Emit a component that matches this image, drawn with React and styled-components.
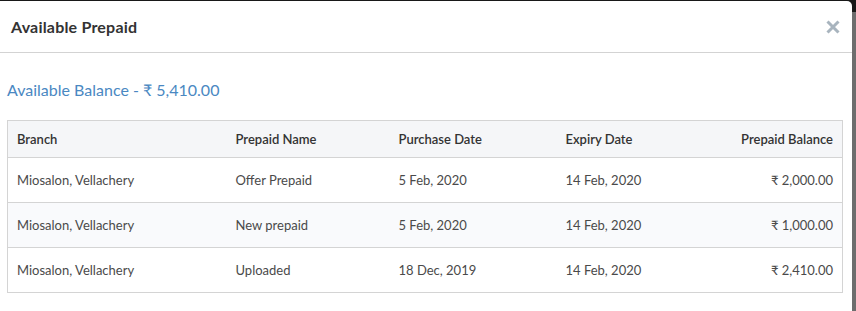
import React from "react";
import styled, { createGlobalStyle } from "styled-components";

const GlobalStyle = createGlobalStyle`
  html, body {
    margin: 0;
    padding: 0;
  }
  body {
    font-family: Lato, "Noto Sans", "DejaVu Sans", sans-serif;
  }
`;

const rows = [
  { branch: "Miosalon, Vellachery", name: "Offer Prepaid", purchase: "5 Feb, 2020", expiry: "14 Feb, 2020", balance: "2,000.00" },
  { branch: "Miosalon, Vellachery", name: "New prepaid", purchase: "5 Feb, 2020", expiry: "14 Feb, 2020", balance: "1,000.00" },
  { branch: "Miosalon, Vellachery", name: "Uploaded", purchase: "18 Dec, 2019", expiry: "14 Feb, 2020", balance: "2,410.00" },
];

const Backdrop = styled.div`
  display: flex;
  height: 311px;
  padding: 1px 4px 0 0;
  box-sizing: border-box;
  background: linear-gradient(#181818 0 12px, #6d6d6d 12px);
  overflow: hidden;
`;

const Modal = styled.div`
  flex: 1;
  background: #fff;
  border-radius: 0 5px 0 0;
  display: flex;
  flex-direction: column;
`;

const Header = styled.div`
  height: 51px;
  display: flex;
  align-items: center;
  justify-content: space-between;
  padding: 0 12px 0 11px;
  border-bottom: 1px solid #d3d3d3;
`;

const Title = styled.h4`
  margin: 0;
  font-size: 16px;
  font-weight: 700;
  color: #333;
  letter-spacing: 0.2px;
`;

const Close = styled.button`
  border: none;
  background: none;
  padding: 0;
  width: 14px;
  height: 14px;
  display: flex;
  cursor: pointer;
`;

const Body = styled.div`
  padding: 0 9px 0 7px;
`;

const Balance = styled.div`
  height: 67px;
  display: flex;
  align-items: center;
  padding-top: 6px;
  box-sizing: border-box;
  font-size: 16px;
  color: #4a88c2;
`;

const Table = styled.table`
  width: 100%;
  border-collapse: collapse;
  border: 1px solid #d4d4d4;
  font-size: 13px;
  table-layout: fixed;
`;

const Th = styled.th`
  height: 36px;
  padding: 0 9px;
  background: #f5f6f8;
  color: #333;
  font-weight: 600;
  text-align: ${(p) => p.$align || "left"};
  border-bottom: 1px solid #d4d4d4;
`;

const Tr = styled.tr`
  background: ${(p) => (p.$striped ? "#f9fafc" : "#fff")};
  border-bottom: 1px solid #d4d4d4;
`;

const Td = styled.td`
  height: 44px;
  padding: 0 9px;
  color: #4a4a4a;
  text-align: ${(p) => p.$align || "left"};
`;

export default function App() {
  return (
    <>
      <GlobalStyle />
      <Backdrop>
        <Modal>
          <Header>
            <Title>Available Prepaid</Title>
            <Close aria-label="Close">
              <svg width="14" height="14" viewBox="0 0 14 14">
                <path d="M1.5 1.5L12.5 12.5M12.5 1.5L1.5 12.5" stroke="#a8b4be" strokeWidth="3" />
              </svg>
            </Close>
          </Header>
          <Body>
            <Balance>Available Balance - ₹ 5,410.00</Balance>
            <Table>
              <colgroup>
                <col style={{ width: "219px" }} />
                <col style={{ width: "163px" }} />
                <col style={{ width: "167px" }} />
                <col style={{ width: "150px" }} />
                <col />
              </colgroup>
              <thead>
                <tr>
                  <Th>Branch</Th>
                  <Th>Prepaid Name</Th>
                  <Th>Purchase Date</Th>
                  <Th>Expiry Date</Th>
                  <Th $align="right">Prepaid Balance</Th>
                </tr>
              </thead>
              <tbody>
                {rows.map((r, i) => (
                  <Tr key={i} $striped={i % 2 === 1}>
                    <Td>{r.branch}</Td>
                    <Td>{r.name}</Td>
                    <Td>{r.purchase}</Td>
                    <Td>{r.expiry}</Td>
                    <Td $align="right">₹ {r.balance}</Td>
                  </Tr>
                ))}
              </tbody>
            </Table>
          </Body>
        </Modal>
      </Backdrop>
    </>
  );
}
